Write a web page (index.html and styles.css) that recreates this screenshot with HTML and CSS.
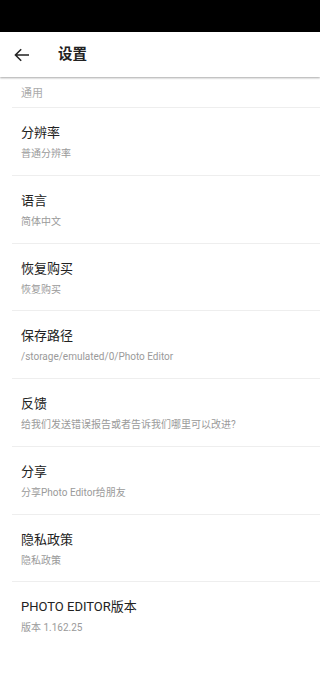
FILE: index.html
```html
<!DOCTYPE html>
<html lang="zh-CN">
<head>
<meta charset="utf-8">
<meta name="viewport" content="width=device-width, initial-scale=1">
<link rel="stylesheet" href="styles.css">
<title>设置</title>
</head>
<body>
<div class="status"></div>
<header class="appbar">
  <svg class="back" width="16" height="14" viewBox="0 0 16 14">
    <path d="M15 7H1.6M7.2 1.2L1.4 7l5.8 5.8" fill="none" stroke="#222" stroke-width="1.5"/>
  </svg>
  <h1 class="title">设置</h1>
</header>
<main class="list">
  <div class="section">通用</div>
  <div class="item"><div class="item-title">分辨率</div><div class="item-sub">普通分辨率</div></div>
  <div class="item"><div class="item-title">语言</div><div class="item-sub">简体中文</div></div>
  <div class="item"><div class="item-title">恢复购买</div><div class="item-sub">恢复购买</div></div>
  <div class="item"><div class="item-title">保存路径</div><div class="item-sub">/storage/emulated/0/Photo Editor</div></div>
  <div class="item"><div class="item-title">反馈</div><div class="item-sub">给我们发送错误报告或者告诉我们哪里可以改进?</div></div>
  <div class="item"><div class="item-title">分享</div><div class="item-sub">分享Photo Editor给朋友</div></div>
  <div class="item"><div class="item-title">隐私政策</div><div class="item-sub">隐私政策</div></div>
  <div class="item last"><div class="item-title">PHOTO EDITOR版本</div><div class="item-sub">版本 1.162.25</div></div>
</main>
</body>
</html>
```
FILE: styles.css
```css
html, body {
  margin: 0;
  padding: 0;
  background: #fff;
}
body {
  width: 320px;
  height: 676px;
  overflow: hidden;
  font-family: Roboto, "Noto Sans CJK SC", sans-serif;
}
.status {
  height: 32px;
  background: #000;
}
.appbar {
  height: 45px;
  display: flex;
  align-items: center;
  background: #fff;
  box-shadow: 0 1px 2px rgba(0,0,0,0.35);
  position: relative;
  z-index: 1;
}
.back {
  margin-left: 14px;
  margin-top: 1px;
}
.title {
  margin: 0 0 0 28px;
  font-size: 14.5px;
  font-weight: 700;
  color: #222;
  line-height: 20px;
}
.list {
  margin-left: 12px;
}
.section {
  height: 31px;
  border-bottom: 1px solid #eeeeee;
  box-sizing: border-box;
  padding: 10px 0 0 9px;
  font-size: 11px;
  line-height: 14px;
  color: #ababab;
}
.item {
  height: 67.75px;
  box-sizing: border-box;
  border-bottom: 1px solid #eeeeee;
  padding: 17px 0 0 9px;
}
.item.last {
  border-bottom: none;
}
.item-title {
  font-size: 13px;
  line-height: 16px;
  color: #222;
}
.item-sub {
  margin-top: 6px;
  font-size: 10px;
  line-height: 14px;
  color: #9a9a9a;
}
```
